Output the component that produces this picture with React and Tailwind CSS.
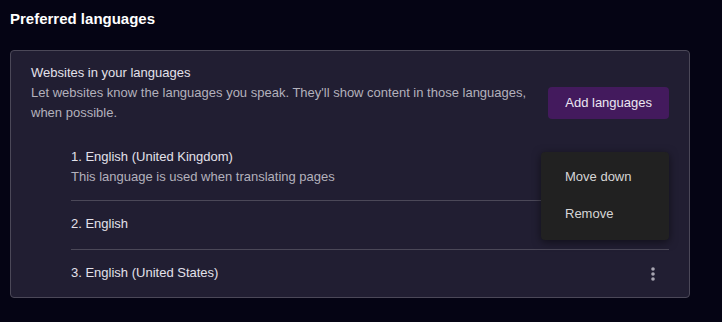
import React from 'react'

const LANGS = [
  { name: '1. English (United Kingdom)', note: 'This language is used when translating pages' },
  { name: '2. English' },
  { name: '3. English (United States)' },
]

function Dots() {
  return (
    <svg width="20" height="20" viewBox="0 0 20 20" className="text-[#a7a5b1]">
      <circle cx="10" cy="5" r="1.8" fill="currentColor" />
      <circle cx="10" cy="10" r="1.8" fill="currentColor" />
      <circle cx="10" cy="15" r="1.8" fill="currentColor" />
    </svg>
  )
}

export default function App() {
  return (
    <div className="w-[722px] h-[322px] bg-[#050414] text-[13px] text-[#e3e1ea] font-['Liberation_Sans',Arial,sans-serif] overflow-hidden">
      <h2 className="px-[10px] pt-[9px] h-[50px] text-[15px] font-bold text-white leading-[20px]">
        Preferred languages
      </h2>

      <div className="relative mx-[10px] w-[680px] h-[248px] bg-[#211e32] border border-[#4b4858] rounded-[4px] px-5 pt-[12px]">
        <div className="leading-[20px]">Websites in your languages</div>
        <div className="flex items-center justify-between">
          <p className="w-[500px] leading-[20px] text-[#b3b1bc]">
            Let websites know the languages you speak. They'll show content in those languages, when possible.
          </p>
          <button className="h-[32px] px-[17px] rounded-[4px] bg-[#431a5d] text-[#ece6f2]">
            Add languages
          </button>
        </div>

        <ul className="ml-10 mt-[14px]">
          {LANGS.map((l, i) => (
            <li
              key={l.name}
              className={`flex justify-between leading-[20px] ${i > 0 ? 'border-t border-[#4b4858] h-[49px] pt-[13px]' : 'h-[63px] items-center pb-[4px]'}`}
            >
              <div>
                <div>{l.name}</div>
                {l.note && <div className="text-[#b3b1bc]">{l.note}</div>}
              </div>
              {i === 2 && (
                <span className="mr-[6px] mt-[1px]">
                  <Dots />
                </span>
              )}
            </li>
          ))}
        </ul>

        <div className="absolute left-[530px] top-[101px] w-[128px] h-[88px] bg-[#212121] rounded-[4px] shadow-[0_2px_8px_rgba(0,0,0,0.5)] pt-[7px] pb-[7px] text-[#d6d6d6]">
          <div className="h-[36px] flex items-center px-[24px]">Move down</div>
          <div className="h-[38px] flex items-center px-[24px]">Remove</div>
        </div>
      </div>
    </div>
  )
}
